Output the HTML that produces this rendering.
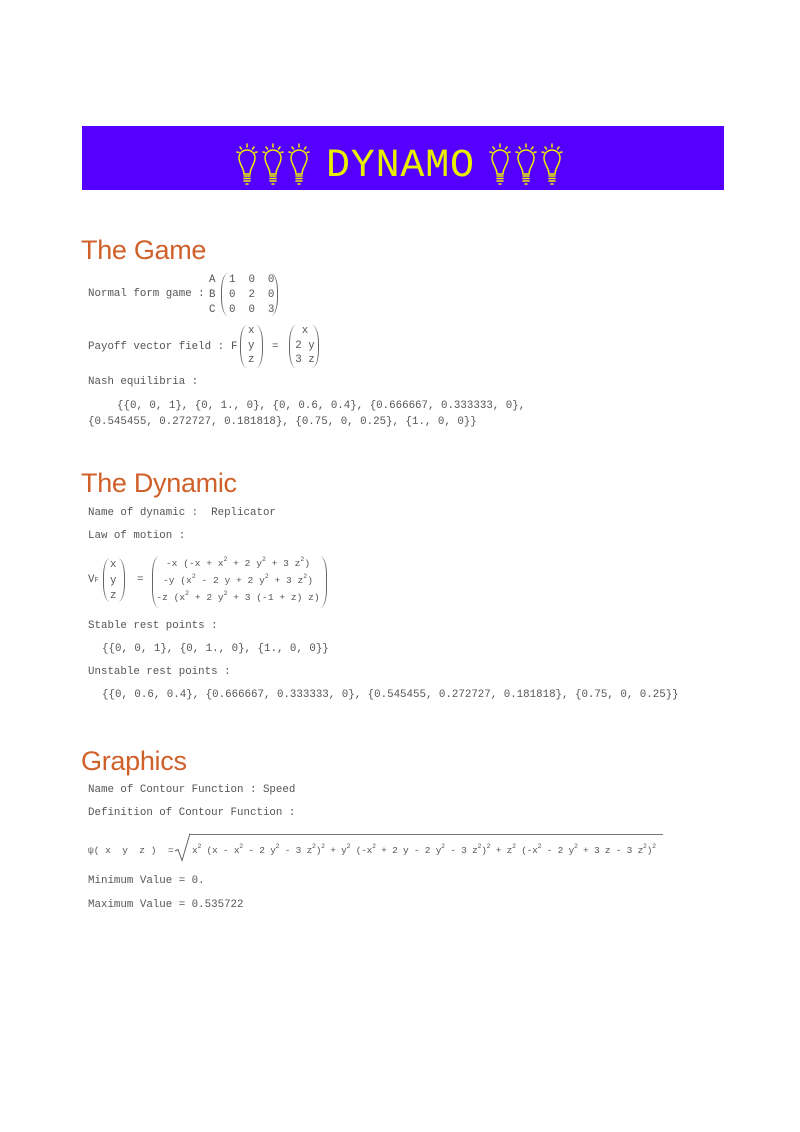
<!DOCTYPE html>
<html><head><meta charset="utf-8"><style>
body{margin:0;width:800px;height:1132px;background:#fff;position:relative;overflow:hidden}
.t{position:absolute;font-family:"Liberation Mono",monospace;font-size:10.8px;line-height:14px;color:#555;white-space:pre}
.c{position:absolute;font-family:"Liberation Mono",monospace;font-size:10.8px;line-height:14px;color:#555;white-space:pre;text-align:center}
.h{position:absolute;font-family:"Liberation Sans",sans-serif;font-size:27px;color:#d0602a;line-height:32px;white-space:pre;letter-spacing:-0.3px}
.lp,.rp{position:absolute;width:6px;border:0 solid #666}
.lp{border-left-width:1px;border-radius:7px 0 0 7px/18px 0 0 18px}
.rp{border-right-width:1px;border-radius:0 7px 7px 0/0 18px 18px 0}
sup{font-size:6.5px;vertical-align:5px;line-height:0}
.b{position:absolute;top:143px}
</style></head><body>
<div style="position:absolute;left:82px;top:126px;width:642px;height:64px;background:#5500ff"></div>
<svg width="0" height="0" style="position:absolute"><defs><g id="bulb" fill="none" stroke="#e8f000" stroke-width="1.5" stroke-linecap="round">
<path d="M11 1v3M4 4l1.5 2M18 4l-1.5 2M1 9l2 .5M21 9l-2 .5"/>
<path d="M8 31 C8 25 3 21 3 15 C3 10 7 7 11 7 C15 7 19 10 19 15 C19 21 14 25 14 31 Z"/>
<path d="M8 33h6M8 35.5h6M8 38h6M10 41h2"/></g></defs></svg>
<svg class="b" style="left:236px" width="22" height="44"><use href="#bulb"/></svg>
<svg class="b" style="left:262px" width="22" height="44"><use href="#bulb"/></svg>
<svg class="b" style="left:288px" width="22" height="44"><use href="#bulb"/></svg>
<svg class="b" style="left:489px" width="22" height="44"><use href="#bulb"/></svg>
<svg class="b" style="left:515px" width="22" height="44"><use href="#bulb"/></svg>
<svg class="b" style="left:541px" width="22" height="44"><use href="#bulb"/></svg>
<div style="position:absolute;left:326px;top:145px;font-family:'Liberation Mono',monospace;font-size:40px;line-height:44px;color:#e8f000;letter-spacing:0.8px">DYNAMO</div>

<div class="h" style="left:81px;top:234px">The Game</div>
<div class="t" style="left:88px;top:287px">Normal form game :</div>
<div class="t" style="left:209px;top:273px;line-height:15px">A
B
C</div>
<div class="lp" style="left:221px;top:273px;height:43px"></div>
<div class="t" style="left:229px;top:273px;line-height:15px">1  0  0
0  2  0
0  0  3</div>
<div class="rp" style="left:271px;top:273px;height:43px"></div>

<div class="t" style="left:88px;top:340px">Payoff vector field :</div>
<div class="t" style="left:231px;top:340px">F</div>
<div class="lp" style="left:240px;top:325px;height:43px"></div>
<div class="t" style="left:248px;top:324px;line-height:14.5px">x
y
z</div>
<div class="rp" style="left:256px;top:325px;height:43px"></div>
<div class="t" style="left:272px;top:340px">=</div>
<div class="lp" style="left:289px;top:325px;height:43px"></div>
<div class="c" style="left:291px;top:324px;width:28px;line-height:14.5px">x
2 y
3 z</div>
<div class="rp" style="left:312px;top:325px;height:43px"></div>

<div class="t" style="left:88px;top:375px">Nash equilibria :</div>
<div class="t" style="left:117px;top:399px">{{0, 0, 1}, {0, 1., 0}, {0, 0.6, 0.4}, {0.666667, 0.333333, 0},</div>
<div class="t" style="left:88px;top:415px">{0.545455, 0.272727, 0.181818}, {0.75, 0, 0.25}, {1., 0, 0}}</div>

<div class="h" style="left:81px;top:467px">The Dynamic</div>
<div class="t" style="left:88px;top:506px">Name of dynamic :  Replicator</div>
<div class="t" style="left:88px;top:529px">Law of motion :</div>
<div class="t" style="left:88px;top:573px">V<span style="font-size:7px">F</span></div>
<div class="lp" style="left:103px;top:558px;height:44px"></div>
<div class="t" style="left:110px;top:558px;line-height:15.5px">x
y
z</div>
<div class="rp" style="left:118px;top:558px;height:44px"></div>
<div class="t" style="left:137px;top:573px">=</div>
<div class="lp" style="left:152px;top:556px;height:52px"></div>
<div class="c" style="left:156px;top:555px;width:164px;font-size:9.6px;line-height:17px">-x (-x + x<sup>2</sup> + 2 y<sup>2</sup> + 3 z<sup>2</sup>)
-y (x<sup>2</sup> - 2 y + 2 y<sup>2</sup> + 3 z<sup>2</sup>)
-z (x<sup>2</sup> + 2 y<sup>2</sup> + 3 (-1 + z) z)</div>
<div class="rp" style="left:320px;top:556px;height:52px"></div>

<div class="t" style="left:88px;top:619px">Stable rest points :</div>
<div class="t" style="left:102px;top:642px">{{0, 0, 1}, {0, 1., 0}, {1., 0, 0}}</div>
<div class="t" style="left:88px;top:665px">Unstable rest points :</div>
<div class="t" style="left:102px;top:688px">{{0, 0.6, 0.4}, {0.666667, 0.333333, 0}, {0.545455, 0.272727, 0.181818}, {0.75, 0, 0.25}}</div>

<div class="h" style="left:81px;top:745px">Graphics</div>
<div class="t" style="left:88px;top:783px">Name of Contour Function : Speed</div>
<div class="t" style="left:88px;top:806px">Definition of Contour Function :</div>
<div class="t" style="left:88px;top:844px;font-size:9.5px">ψ( x  y  z )  =</div>
<svg style="position:absolute;left:174px;top:833px" width="18" height="30"><path d="M1 18l3-1.5 4 11 8-27" fill="none" stroke="#666" stroke-width="1"/></svg>
<div style="position:absolute;left:190px;top:834px;width:473px;border-top:1px solid #777"></div>
<div class="t" style="left:192px;top:844px;font-size:9.5px;letter-spacing:-0.25px">x<sup>2</sup> (x - x<sup>2</sup> - 2 y<sup>2</sup> - 3 z<sup>2</sup>)<sup>2</sup> + y<sup>2</sup> (-x<sup>2</sup> + 2 y - 2 y<sup>2</sup> - 3 z<sup>2</sup>)<sup>2</sup> + z<sup>2</sup> (-x<sup>2</sup> - 2 y<sup>2</sup> + 3 z - 3 z<sup>2</sup>)<sup>2</sup></div>
<div class="t" style="left:88px;top:874px">Minimum Value = 0.</div>
<div class="t" style="left:88px;top:898px">Maximum Value = 0.535722</div>
</body></html>
